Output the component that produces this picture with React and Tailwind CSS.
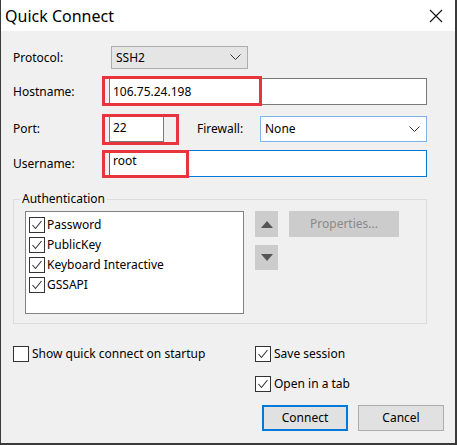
import React from 'react';

const font = { fontFamily: '"Noto Sans", "Liberation Sans", sans-serif' };

function Check({ checked = true }) {
  return (
    <span className="flex h-[16px] w-[16px] shrink-0 items-center justify-center border border-[#333333] bg-white">
      {checked && (
        <svg width="12" height="12" viewBox="0 0 12 12">
          <polyline points="1.5,6 4.5,9.5 10.5,2" fill="none" stroke="#333" strokeWidth="1.1" />
        </svg>
      )}
    </span>
  );
}

function Chevron() {
  return (
    <svg width="11" height="7" viewBox="0 0 11 7">
      <polyline points="0.5,0.5 5.5,5.5 10.5,0.5" fill="none" stroke="#333" strokeWidth="1" />
    </svg>
  );
}

export default function App() {
  return (
    <div className="h-[445px] w-[457px] text-[12px] text-black" style={font}>
      <div className="flex h-full flex-col border-l border-r-2 border-b-2 border-[#3a3a3a] bg-[#f0f0f0]">
        {/* title bar */}
        <div className="flex h-[31px] shrink-0 items-center justify-between bg-white pl-[4px] pr-[12px]">
          <span className="text-[16px] leading-none">Quick Connect</span>
          <svg width="14" height="14" viewBox="0 0 14 14">
            <path d="M1 1 L13 13 M13 1 L1 13" stroke="#111" strokeWidth="1.1" />
          </svg>
        </div>

        <div className="relative flex flex-col pl-[12px] pt-[15px]">
          {/* protocol */}
          <div className="flex h-[23px] items-center">
            <span className="w-[98px]">Protocol:</span>
            <div className="flex h-[23px] w-[137px] items-center justify-between border border-[#adadad] bg-[#e5e5e5] pl-[4px] pr-[6px]">
              <span>SSH2</span>
              <Chevron />
            </div>
          </div>

          {/* hostname */}
          <div className="mt-[9px] flex h-[27px] items-center">
            <span className="w-[96px]">Hostname:</span>
            <div className="flex h-[27px] w-[318px] items-center border border-[#7a7a7a] bg-white pl-[3px]">
              106.75.24.198
            </div>
          </div>

          {/* port / firewall */}
          <div className="mt-[11px] flex h-[26px] items-center">
            <span className="w-[96px]">Port:</span>
            <div className="flex h-[26px] w-[55px] items-start border border-[#7a7a7a] bg-white pl-[3px] pt-[2px]">
              22
            </div>
            <span className="ml-[33px] w-[63px]">Firewall:</span>
            <div className="flex h-[26px] w-[167px] items-center justify-between border border-[#7eb4ea] bg-white pl-[4px] pr-[6px]">
              <span>None</span>
              <Chevron />
            </div>
          </div>

          {/* username */}
          <div className="mt-[8px] flex h-[27px] items-center">
            <span className="w-[96px]">Username:</span>
            <div className="flex h-[27px] w-[318px] items-start border border-[#0078d7] bg-white pl-[3px] pt-[1px]">
              root
            </div>
          </div>

          {/* authentication group */}
          <fieldset className="mt-[14px] h-[133px] w-[414px] border border-[#dcdcdc] pl-[11px]">
            <legend className="ml-[-5px] px-[2px] leading-[16px]">Authentication</legend>
            <div className="mt-[4px] flex gap-[11px]">
              <div className="flex h-[103px] w-[219px] flex-col gap-[4px] border border-[#828282] bg-white pl-[3px] pt-[5px]">
                {['Password', 'PublicKey', 'Keyboard Interactive', 'GSSAPI'].map((t) => (
                  <div key={t} className="flex h-[16px] items-center gap-[2px]">
                    <Check />
                    <span>{t}</span>
                  </div>
                ))}
              </div>
              <div className="flex flex-col gap-[8px]">
                <div className="flex h-[26px] w-[23px] items-center justify-center bg-[#cccccc]">
                  <svg width="12" height="7" viewBox="0 0 12 7"><polygon points="6,0 12,7 0,7" fill="#555" /></svg>
                </div>
                <div className="flex h-[25px] w-[23px] items-center justify-center bg-[#cccccc]">
                  <svg width="12" height="7" viewBox="0 0 12 7"><polygon points="0,0 12,0 6,7" fill="#555" /></svg>
                </div>
              </div>
              <div className="flex h-[26px] w-[110px] items-center justify-center bg-[#cccccc] text-[#8a8a8a]">
                Properties...
              </div>
            </div>
          </fieldset>

          {/* bottom options */}
          <div className="mt-[21px] flex">
            <div className="flex w-[242px] items-center gap-[3px] self-start">
              <Check checked={false} />
              <span>Show quick connect on startup</span>
            </div>
            <div className="flex flex-col gap-[12px]">
              <div className="flex items-center gap-[3px]">
                <Check />
                <span>Save session</span>
              </div>
              <div className="flex items-center gap-[3px]">
                <Check />
                <span>Open in a tab</span>
              </div>
            </div>
          </div>

          <div className="mt-[12px] flex justify-end gap-[10px] pr-[11px]">
            <button className="flex h-[26px] w-[86px] items-center justify-center border-2 border-[#0078d7] bg-[#e1e1e1]">Connect</button>
            <button className="flex h-[26px] w-[86px] items-center justify-center border border-[#adadad] bg-[#e1e1e1]">Cancel</button>
          </div>

          {/* red annotation boxes */}
          <div className="pointer-events-none absolute left-[101px] top-[45px] h-[30px] w-[160px] border-[3px] border-[#e8353d]" />
          <div className="pointer-events-none absolute left-[101px] top-[83px] h-[31px] w-[77px] border-[3px] border-[#e8353d]" />
          <div className="pointer-events-none absolute left-[101px] top-[119px] h-[28px] w-[87px] border-[3px] border-[#e8353d]" />
        </div>
      </div>
    </div>
  );
}
